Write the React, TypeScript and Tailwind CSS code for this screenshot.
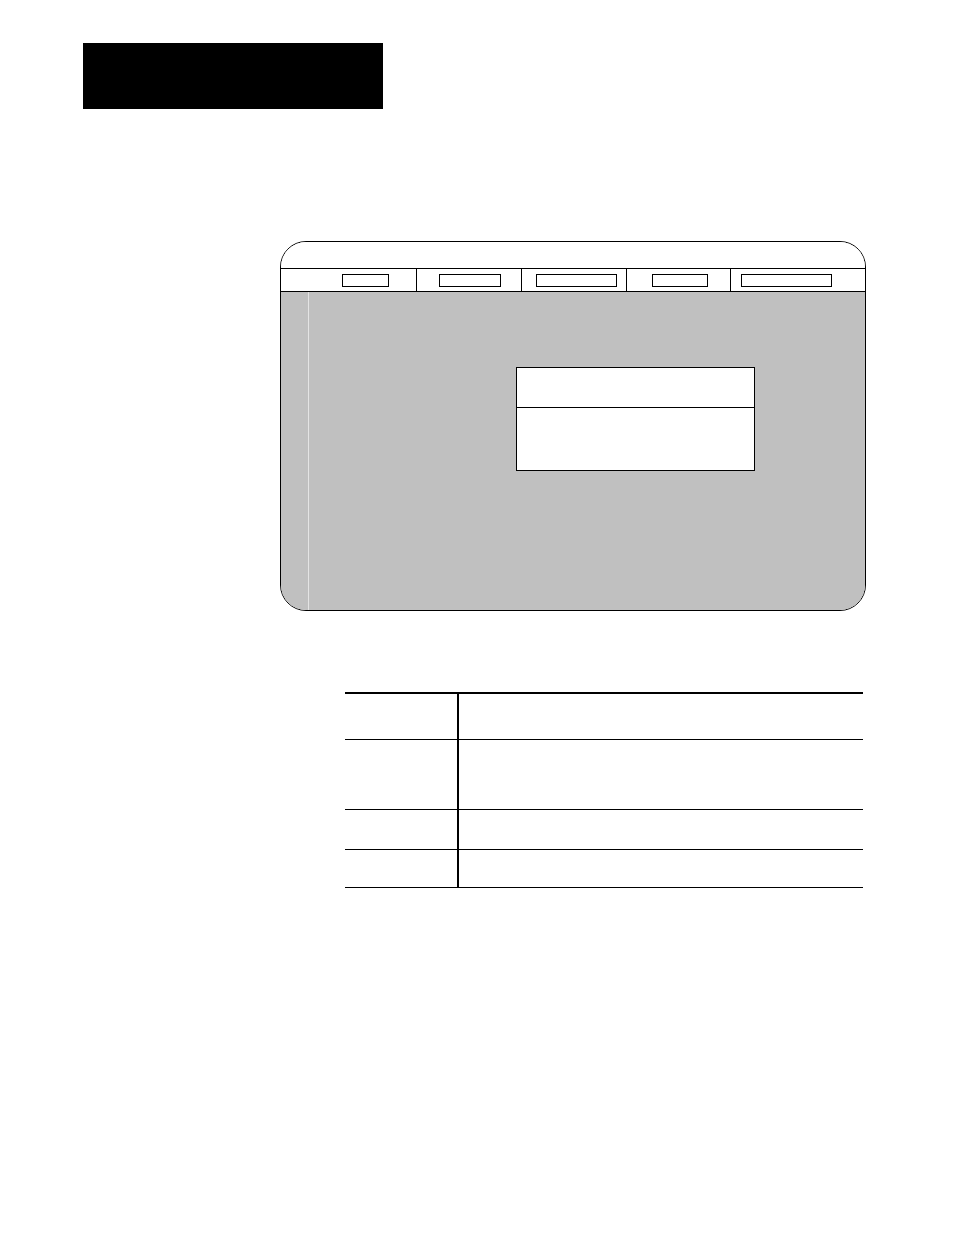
export default function App() {
  const keys = [
    { cell: 'w-[136px] border-r', pad: 'pl-[61px]', box: 'w-[47px]' },
    { cell: 'w-[105px] border-r', pad: 'pl-[22px]', box: 'w-[62px]' },
    { cell: 'w-[105px] border-r', pad: 'pl-[14px]', box: 'w-[81px]' },
    { cell: 'w-[104px] border-r', pad: 'pl-[25px]', box: 'w-[56px]' },
    { cell: 'flex-1', pad: 'pl-[10px]', box: 'w-[91px]' },
  ]

  const rows = ['h-[46px]', 'h-[70px]', 'h-[40px]', 'h-[38px]']

  return (
    <div className="w-[954px] h-[1235px] bg-white overflow-hidden pt-[43px]">
      {/* chapter tab */}
      <div className="ml-[83px] w-[300px] h-[66px] bg-black" />

      {/* screen */}
      <div className="ml-[280px] mt-[132px] w-[586px] h-[370px] border border-black rounded-[26px] overflow-hidden flex flex-col">
        <div className="h-[27px] border-b border-black bg-white" />
        <div className="h-[23px] border-b border-black bg-white flex">
          {keys.map((k, i) => (
            <div key={i} className={`${k.cell} border-black h-full flex items-center ${k.pad}`}>
              <div className={`${k.box} h-[13px] border border-black`} />
            </div>
          ))}
        </div>
        <div className="flex-1 bg-[#c0c0c0] flex">
          <div className="w-[27px]" />
          <div className="w-px bg-[#e4e4e4]" />
          <div className="flex-1 pl-[207px] pt-[75px]">
            <div className="w-[239px] h-[104px] border border-black bg-white">
              <div className="h-[40px] border-b border-black" />
            </div>
          </div>
        </div>
      </div>

      {/* table */}
      <div className="ml-[345px] mt-[81px] w-[518px] border-t-2 border-black">
        {rows.map((h, i) => (
          <div key={i} className={`${h} flex border-b border-black`}>
            <div className="w-[114px] border-r-2 border-black" />
            <div className="flex-1" />
          </div>
        ))}
      </div>
    </div>
  )
}
